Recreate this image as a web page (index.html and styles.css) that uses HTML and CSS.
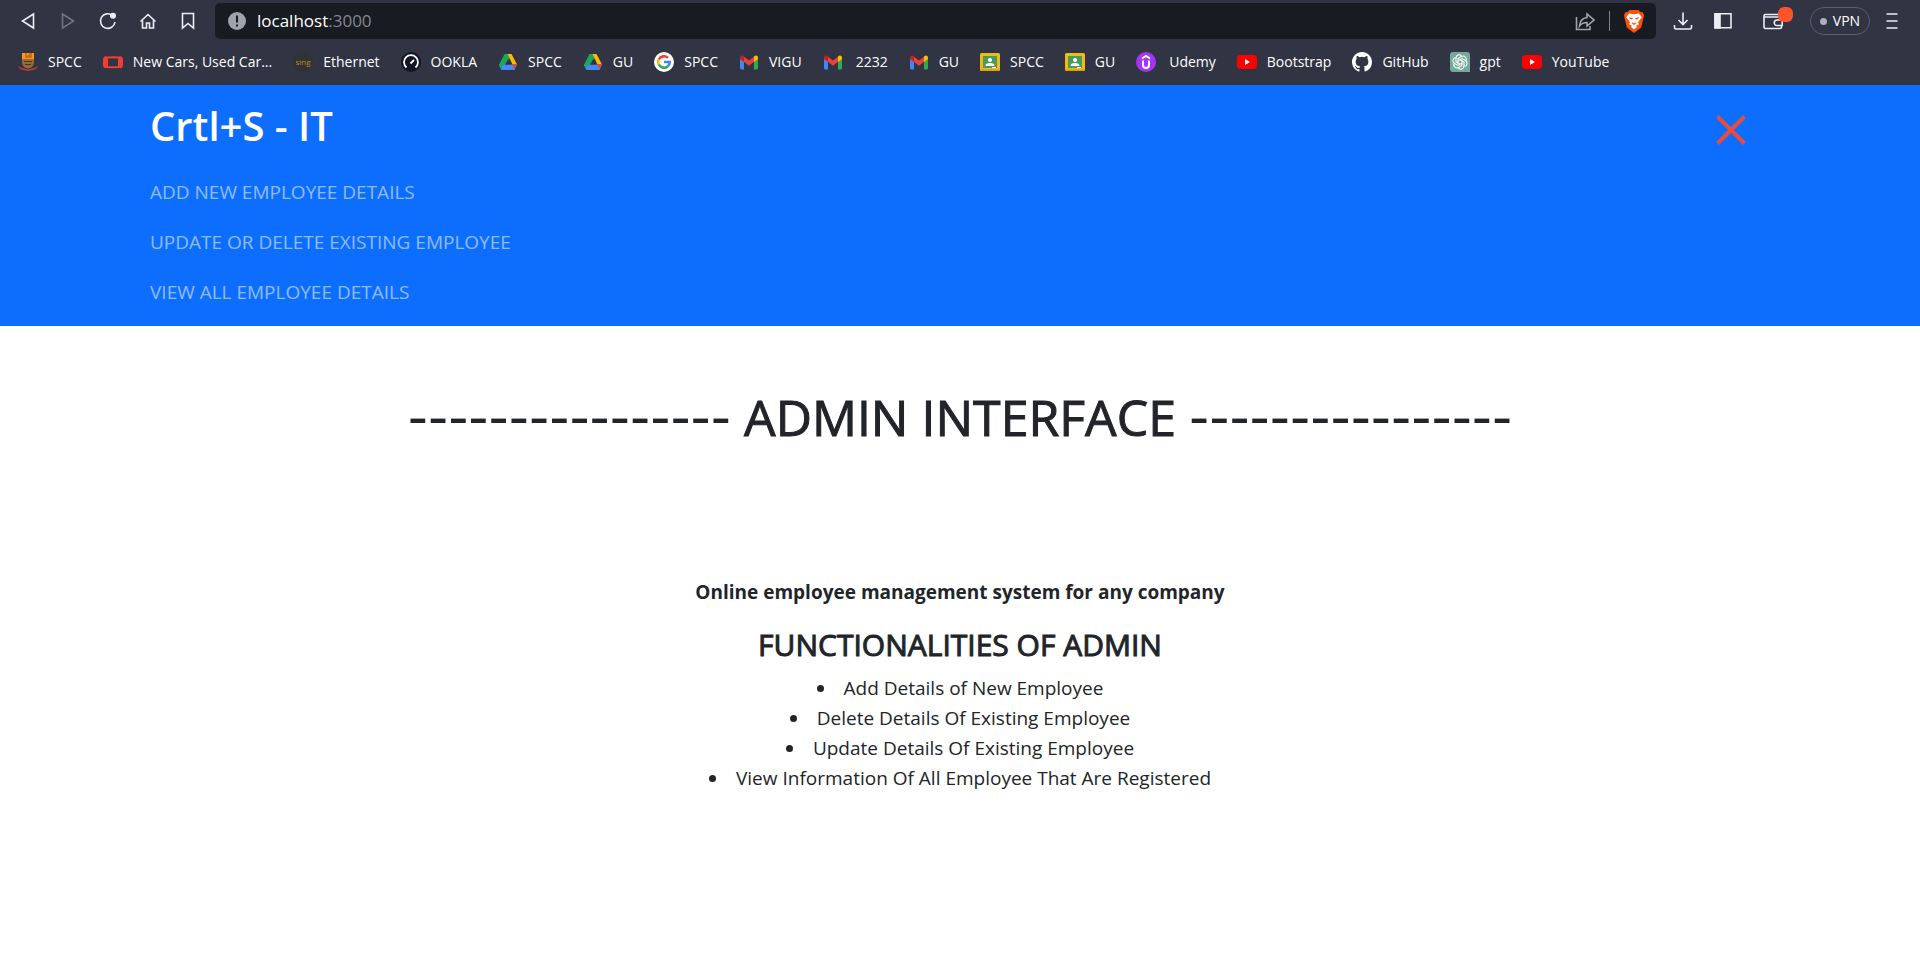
FILE: index.html
```html
<!DOCTYPE html>
<html lang="en">
<head>
<meta charset="utf-8">
<title>Crtl+S - IT</title>
<link rel="stylesheet" href="styles.css">
</head>
<body>
<svg class="defs" width="0" height="0" aria-hidden="true">
  <symbol id="drive" viewBox="0 0 20 20">
    <path fill="#1ea55a" d="M6.500 2h4l1.700 3-7.600 12L1 13z"/>
    <path fill="#ffba00" d="M9.500 2h4L19 12.500h-4.500z"/>
    <path fill="#4688f4" d="M4 12.500h15L16.500 18h-13L1 13.500 2 12z"/>
    <path fill="#1ea55a" d="M1 13l4-7 2.500 2.500-4.500 8z"/>
    <path fill="#ea4335" d="M14 12.500h5L16.500 17z"/>
    <path fill="#303443" d="M10 7.500l2.800 5H7.200z"/>
  </symbol>
  <symbol id="gmail" viewBox="0 0 20 20">
    <path fill="#4285f4" d="M1 6l4 3v8.500H2.500Q1 17.500 1 16z"/>
    <path fill="#34a853" d="M19 6l-4 3v8.500h2.500q1.500 0 1.500-1.500z"/>
    <path fill="#ea4335" d="M4 4l6 4.500L16 4v5l-6 4.700L4 9z"/>
    <path fill="#c5221f" d="M1 5.500Q1 3.500 3 3.500q1 0 2 .8V10L1 7z"/>
    <path fill="#fbbc04" d="M19 5.500q0-2-2-2-1 0-2 .8V10l4-3z"/>
  </symbol>
  <symbol id="classroom" viewBox="0 0 20 20">
    <rect y="1" width="20" height="18" rx="1.500" fill="#f4b915"/>
    <path fill="#d99d0c" d="M0 17.500h20q0 1.500-1.500 1.500h-17Q0 19 0 17.500z"/>
    <rect x="3" y="4" width="14" height="12" fill="#4c9a57"/>
    <circle cx="10" cy="8" r="2" fill="#fff"/>
    <path fill="#fff" d="M5.500 14q0-3 4.500-3t4.500 3zM12 15h4v1h-4z"/>
  </symbol>
  <symbol id="youtube" viewBox="0 0 20 20">
    <rect y="3" width="20" height="14" rx="3.500" fill="#f00"/>
    <path fill="#fff" d="M8 7l5 3-5 3z"/>
  </symbol>
</svg>

<header class="browser">
  <div class="toolbar">
    <button class="tool" aria-label="Back"><svg class="glyph" viewBox="0 0 20 20"><path d="M15.500 3v14L4.500 10z"/></svg></button>
    <button class="tool tool-off" aria-label="Forward"><svg class="glyph" viewBox="0 0 20 20"><path d="M4.500 3v14l11-7z"/></svg></button>
    <button class="tool" aria-label="Reload"><svg class="glyph" viewBox="0 0 20 20"><path d="M14.500 4.500A7.300 7.300 0 1 0 17 11"/><circle class="solid" cx="15" cy="4.800" r="2.200"/></svg></button>
    <button class="tool" aria-label="Home"><svg class="glyph" viewBox="0 0 20 20"><path d="M2.500 10.500L10 3.500l7.500 7M4.500 9.500V17h4v-5h3v5h4V9.500"/></svg></button>
    <button class="tool" aria-label="Bookmark this page"><svg class="glyph" viewBox="0 0 20 20"><path d="M4.500 2.500h11V17L10 12.500 4.500 17z"/></svg></button>
    <div class="address">
      <svg class="info" viewBox="0 0 20 20"><circle cx="10" cy="10" r="9" fill="#9fa3ad"/><path stroke="#181b22" stroke-width="2" d="M10 4.500v7M10 13.500v2"/></svg>
      <span class="url">localhost<span class="port">:3000</span></span>
      <button class="share" aria-label="Share"><svg class="glyph" viewBox="0 0 20 20"><path d="M1.500 6v12.500h13.500V15M12 6.500V3l7 6-7 6v-3.500q-5 0-7.500 3.500.5-7.500 7.500-8.500z"/></svg></button>
      <span class="divider"></span>
      <button class="shields" aria-label="Brave Shields"><svg viewBox="0 0 20 23"><path fill="#fb5207" d="M5.500 0h9l2 2.300 2-.3L20 5l-.5 3-2.300 9.500L10 23l-7.200-5.500L.5 8 0 5l1.500-3 2 .3z"/><path fill="#fff" d="M5 3.500l5 .8 5-.8 2.800 3.700-3.800 5 1 2L10 17l-5-2.800 1-2-3.800-5zM6.700 16.800L10 15.500l3.300 1.300L10 19.500z"/><path fill="#fb5207" d="M4.800 7.200l4 .8-.8 1.500-1.800-.5zM15.200 7.200l-4 .8.8 1.500 1.800-.5zM8.300 12.500l1.700 1 1.700-1 .8.800L10 15l-2.500-1.700z"/></svg></button>
    </div>
    <button class="tool" aria-label="Downloads"><svg class="glyph" viewBox="0 0 20 20"><path d="M10 1.500V13M5.500 9l4.500 4.500L14.500 9M1.500 14v2.500q0 1.500 1.500 1.500h14q1.500 0 1.500-1.500V14"/></svg></button>
    <button class="tool" aria-label="Sidebar"><svg class="glyph" viewBox="0 0 20 20"><path d="M2 2.800h16v14H2z"/><path class="solid" d="M2 3h5v14H2z"/></svg></button>
    <button class="tool wallet" aria-label="Wallet"><svg class="glyph" viewBox="0 0 20 20"><path d="M18.500 9V5q0-1.500-1.500-1.500H2.500Q1 3.500 1 5v11q0 1.500 1.500 1.500H17q1.500 0 1.500-1.500v-1.500M1 6h16.500M19.200 9v5.500H14a2.700 2.700 0 0 1 0-5.500z"/></svg><span class="badge"></span></button>
    <button class="vpn"><span class="dot"></span>VPN</button>
    <button class="tool" aria-label="Menu"><svg class="glyph" viewBox="0 0 20 20"><path d="M4.500 3h11M4.500 10h11M4.500 17h11"/></svg></button>
  </div>
  <nav class="bookmarks" aria-label="Bookmarks">
    <a href="#"><svg viewBox="0 0 20 20"><path fill="#e9a01a" d="M4 1h12v7H4z"/><path fill="#d9661c" d="M7 1h2v3l3-3h2v5H7z"/><path fill="#946a3a" d="M4 7h12v4q-1 5-6 5.500Q5 16 4 11z"/><path fill="#4a3525" d="M6 9h8v1H6zM7 12h6v1H7z"/><path fill="none" stroke="#d0353a" stroke-width="1.400" d="M1 14.500q1.500 3 4 2.500 5 2 10 0 2.500.5 4-2.500"/></svg>SPCC</a>
    <a href="#"><svg viewBox="0 0 20 20"><path fill="none" stroke="#ef3e36" stroke-width="2" d="M4 5.500Q10 4.800 16 5.500v9.500Q10 15.700 4 15z"/><path fill="none" stroke="#ef3e36" stroke-width="3" d="M3.500 5.500q-2 .5-2 2v5.500q0 1.500 2 2M16.500 5.500q2 .5 2 2v5.500q0 1.500-2 2"/></svg>New Cars, Used Car...</a>
    <a href="#"><svg viewBox="0 0 20 20"><circle cx="10" cy="10" r="10" fill="#323230"/><text class="sing" x="10" y="13" text-anchor="middle">sing</text></svg>Ethernet</a>
    <a href="#"><svg viewBox="0 0 20 20"><circle cx="10" cy="10" r="10" fill="#141526"/><path fill="none" stroke="#fff" stroke-width="1.800" d="M5.500 15.500a7 7 0 1 1 9 0M9.500 11.500L13 8"/></svg>OOKLA</a>
    <a href="#"><svg><use href="#drive"/></svg>SPCC</a>
    <a href="#"><svg><use href="#drive"/></svg>GU</a>
    <a href="#"><svg viewBox="0 0 20 20"><circle cx="10" cy="10" r="10" fill="#fff"/><g fill="none" stroke-width="2.600"><path stroke="#ea4335" d="M4.800 7.500a5.800 5.800 0 0 1 9.200-1.600"/><path stroke="#fbbc05" d="M4.800 7.300a5.800 5.800 0 0 0 0 5.400"/><path stroke="#34a853" d="M4.800 12.500a5.800 5.800 0 0 0 8.900 1.900"/><path stroke="#4285f4" d="M10 10h5.800a5.800 5.800 0 0 1-2.200 4.400"/></g></svg>SPCC</a>
    <a href="#"><svg><use href="#gmail"/></svg>VIGU</a>
    <a class="spaced" href="#"><svg><use href="#gmail"/></svg>2232</a>
    <a href="#"><svg><use href="#gmail"/></svg>GU</a>
    <a href="#"><svg><use href="#classroom"/></svg>SPCC</a>
    <a href="#"><svg><use href="#classroom"/></svg>GU</a>
    <a class="spaced" href="#"><svg viewBox="0 0 20 20"><circle cx="10" cy="10" r="10" fill="#a435f0"/><path fill="none" stroke="#fff" stroke-width="2" d="M7 8.500V13q0 3 3 3t3-3V8.500M6 6.500l4-2.500 4 2.500"/></svg>Udemy</a>
    <a href="#"><svg><use href="#youtube"/></svg>Bootstrap</a>
    <a href="#"><svg viewBox="0 0 16 16"><path fill="#fff" d="M8 0C3.580 0 0 3.580 0 8c0 3.540 2.290 6.530 5.470 7.590.4.070.55-.17.55-.38 0-.19-.01-.82-.01-1.490-2.010.37-2.530-.49-2.690-.94-.09-.23-.48-.94-.82-1.130-.28-.15-.68-.52-.01-.53.63-.01 1.080.58 1.230.82.72 1.210 1.870.87 2.330.66.070-.52.280-.87.510-1.070-1.780-.2-3.640-.89-3.640-3.950 0-.87.310-1.590.82-2.150-.08-.2-.36-1.020.08-2.120 0 0 .67-.21 2.200.82a7.600 7.600 0 0 1 4 0c1.530-1.040 2.200-.82 2.200-.82.44 1.100.16 1.920.08 2.120.51.56.82 1.270.82 2.150 0 3.070-1.870 3.750-3.650 3.950.29.25.54.73.54 1.480 0 1.070-.01 1.930-.01 2.200 0 .21.15.46.55.38A8 8 0 0 0 16 8c0-4.420-3.580-8-8-8z"/></svg>GitHub</a>
    <a href="#"><svg viewBox="0 0 20 20"><path fill="#74aa9c" d="M3 0h14q3 0 3 3v17H3q-3 0-3-3V3q0-3 3-3z"/><g fill="none" stroke="#fff" stroke-width="1.100"><path id="petal" d="M8 11.200V6.500l3.500-2a3.200 3.200 0 0 1 4.600 3.800"/><use href="#petal" transform="rotate(60 10 10)"/><use href="#petal" transform="rotate(120 10 10)"/><use href="#petal" transform="rotate(180 10 10)"/><use href="#petal" transform="rotate(240 10 10)"/><use href="#petal" transform="rotate(300 10 10)"/></g></svg>gpt</a>
    <a href="#"><svg><use href="#youtube"/></svg>YouTube</a>
  </nav>
</header>

<nav class="navbar" aria-label="Main">
  <div class="container">
    <div class="navbar-head">
      <a class="brand" href="#">Crtl+S - IT</a>
      <button class="close" aria-label="Close menu"><svg viewBox="0 0 30 30"><path d="M1.500 1.500l27 27M28.500 1.500l-27 27"/></svg></button>
    </div>
    <ul class="links">
      <li><a href="#">ADD NEW EMPLOYEE DETAILS</a></li>
      <li><a href="#">UPDATE OR DELETE EXISTING EMPLOYEE</a></li>
      <li><a href="#">VIEW ALL EMPLOYEE DETAILS</a></li>
    </ul>
  </div>
</nav>

<main class="content">
  <h1><span class="dashes">----------------</span> ADMIN INTERFACE <span class="dashes">----------------</span></h1>
  <p class="tagline">Online employee management system for any company</p>
  <h2>FUNCTIONALITIES OF ADMIN</h2>
  <ul class="features">
    <li>Add Details of New Employee</li>
    <li>Delete Details Of Existing Employee</li>
    <li>Update Details Of Existing Employee</li>
    <li>View Information Of All Employee That Are Registered</li>
  </ul>
</main>
</body>
</html>
```
FILE: styles.css
```css
* { box-sizing: border-box; }

body {
  margin: 0;
  background: #fff;
  color: #212529;
  font-family: "Segoe UI", "Open Sans", "Noto Sans", sans-serif;
  font-size: 19px;
  line-height: 30px;
}

button {
  border: 0;
  padding: 0;
  background: none;
  color: inherit;
  font: inherit;
}

a { color: inherit; text-decoration: none; }
ul { margin: 0; padding: 0; }
svg { display: block; flex: none; }
.defs { position: absolute; }

/* Browser chrome */
.browser {
  background: #303443;
  color: #fff;
  font-size: 14px;
  line-height: 20px;
}

.toolbar {
  display: flex;
  align-items: center;
  height: 42px;
  padding: 0 8px;
}

.tool {
  display: grid;
  place-items: center;
  flex: none;
  width: 40px;
  height: 34px;
}

.tool-off { opacity: 0.35; }

.glyph {
  width: 20px;
  height: 20px;
  fill: none;
  stroke: #eceef2;
  stroke-width: 1.6;
}

.glyph .solid { fill: #eceef2; }

.address {
  display: flex;
  align-items: center;
  flex: 1;
  height: 36px;
  margin: 0 7px;
  padding: 0 12px;
  border-radius: 5px;
  background: #181b22;
}

.info { width: 20px; height: 20px; }
.url { flex: 1; margin-left: 10px; font-size: 17px; }
.port { color: #84878e; }
.share { opacity: 0.65; }
.divider { width: 1px; height: 20px; margin: 0 14px; background: #80838a; }
.shields svg { width: 20px; height: 23px; }

.wallet { position: relative; margin-left: 10px; }

.badge {
  position: absolute;
  top: 3px;
  right: 0;
  width: 15px;
  height: 15px;
  border-radius: 6px;
  background: #fb542b;
}

.vpn {
  display: flex;
  align-items: center;
  justify-content: center;
  gap: 6px;
  width: 60px;
  height: 28px;
  margin: 0 2px 0 17px;
  border: 1px solid #5a5d73;
  border-radius: 14px;
}

.dot { width: 7px; height: 7px; border-radius: 50%; background: #adafc0; }

.bookmarks {
  display: flex;
  align-items: center;
  gap: 21px;
  height: 43px;
  padding: 0 18px 4px;
  white-space: nowrap;
}

.bookmarks a { display: flex; align-items: center; gap: 10px; }
.bookmarks .spaced { gap: 13px; }
.bookmarks svg { width: 20px; height: 20px; }
.sing { fill: #b38a32; font-size: 8px; }

/* Site navigation */
.navbar { padding: 11px 0 9px; background: #0d6efd; }

.container { max-width: 1650px; margin: 0 auto; padding: 0 15px; }

.navbar-head {
  display: flex;
  align-items: flex-start;
  justify-content: space-between;
  height: 71px;
}

.brand { color: #fff; font-size: 40px; font-weight: 600; line-height: 60px; }
.close { padding: 19px 24px 0 0; }
.close svg { width: 30px; height: 30px; stroke: #e74c3c; stroke-width: 4; }

.links { list-style: none; color: rgba(255, 255, 255, 0.55); }
.links a { display: block; padding: 10px 0; }

/* Page content */
.content { padding: 61px 15px; text-align: center; }

h1, h2 { font-weight: 500; -webkit-text-stroke: 1px currentColor; }

h1 { margin: 0; font-size: 50px; line-height: 60px; }

.dashes {
  font-family: "DejaVu Sans", sans-serif;
  font-size: 56px;
  line-height: 50px;
  -webkit-text-stroke: 0;
}

.tagline { margin: 130px 0 20px; font-weight: 700; }

h2 { margin: 0 0 10px; font-size: 30px; line-height: 36px; }

.features { list-style-position: inside; }
```
